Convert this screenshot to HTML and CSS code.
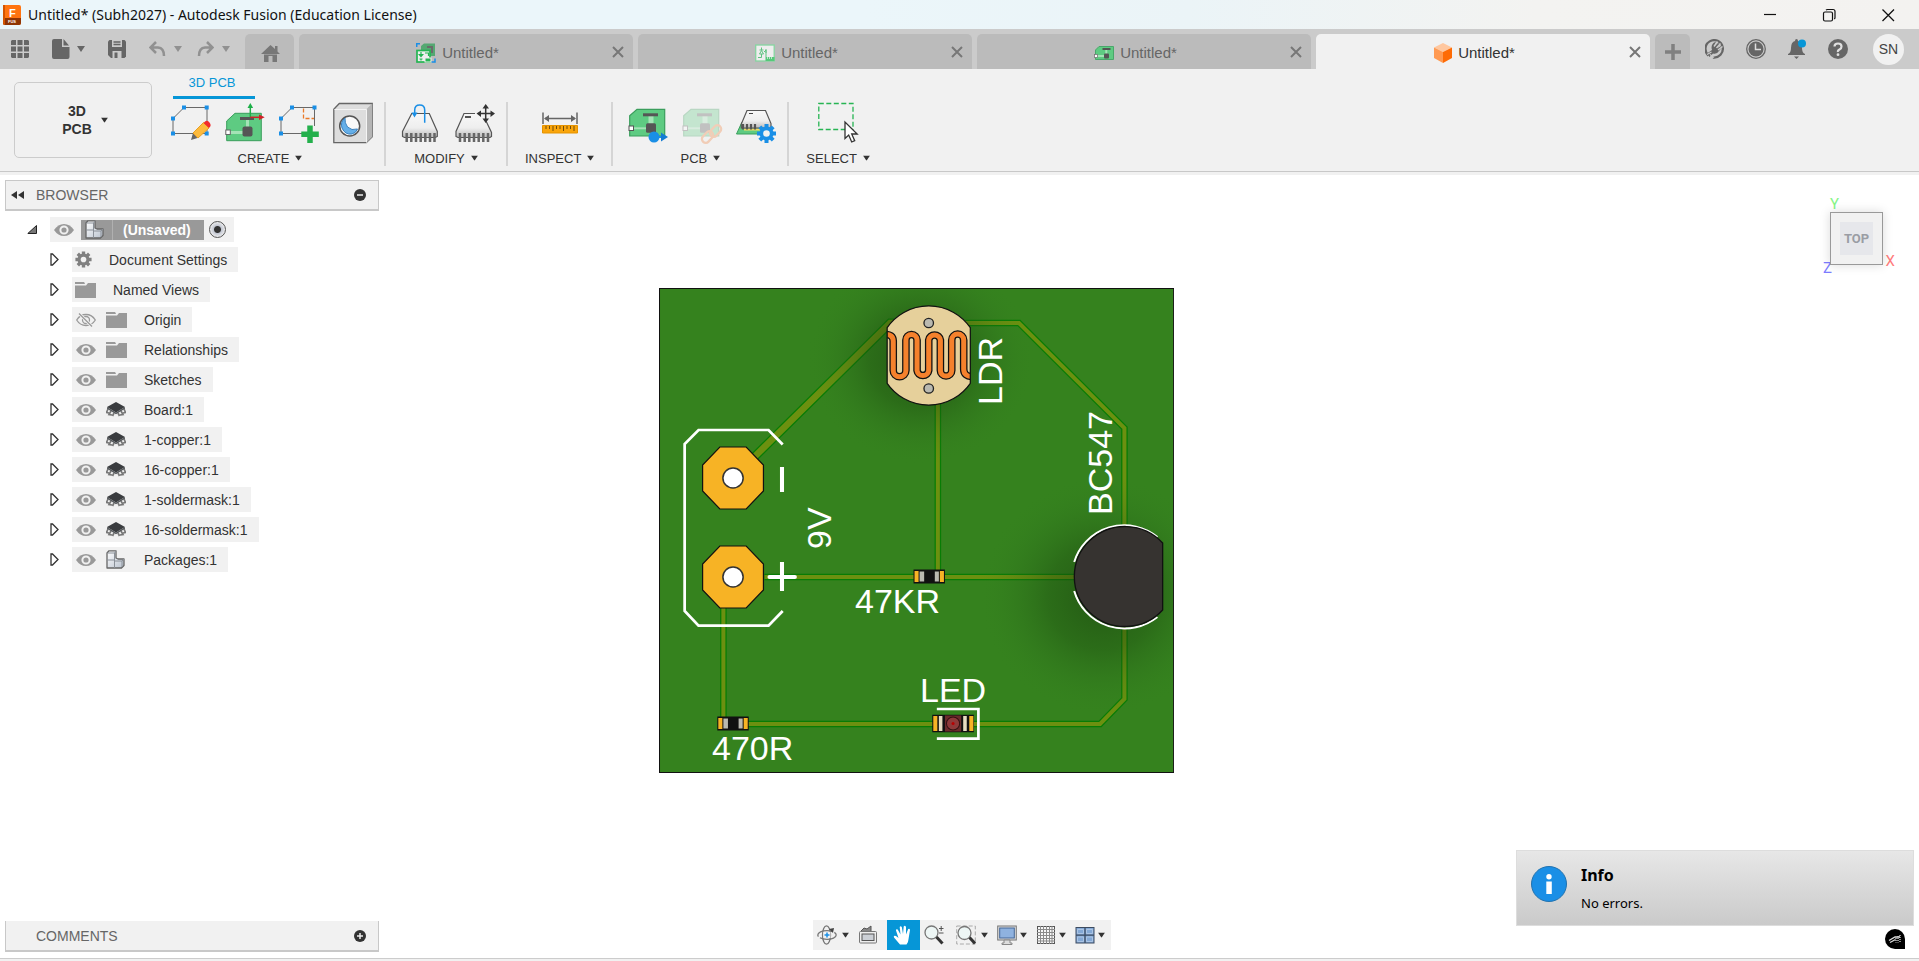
FILE: index.html
```html
<!DOCTYPE html>
<html lang="en">
<head>
<meta charset="utf-8">
<title>Untitled* (Subh2027) - Autodesk Fusion (Education License)</title>
<link rel="stylesheet" href="styles.css">
</head>
<body>
<svg class="defs" aria-hidden="true">
  <defs>
    <linearGradient id="steel" x1="0" y1="0" x2="1" y2="1"><stop offset="0" stop-color="#fff"/><stop offset="1" stop-color="#b9c2ce"/></linearGradient>
    <linearGradient id="chipfill" x1="0" y1="0" x2="0" y2="1"><stop offset="0" stop-color="#f8f8f8"/><stop offset=".6" stop-color="#eee"/><stop offset="1" stop-color="#bbb"/></linearGradient>
  </defs>
  <symbol id="eye" viewBox="0 0 20 14"><path d="M0 7Q4 1 10 1T20 7Q16 13 10 13T0 7Z" fill="#999"/><circle cx="10" cy="7" r="3.600" fill="none" stroke="#f1f1f1" stroke-width="2"/></symbol>
  <symbol id="eyeoff" viewBox="0 0 20 14"><path d="M.7 7Q4 1.500 10 1.500T19.300 7Q16 12.500 10 12.500T.7 7Z" fill="none" stroke="#999" stroke-width="1.300"/><circle cx="10" cy="7" r="3.500" fill="none" stroke="#999" stroke-width="1.300"/><path d="M3 .5 16 13.500" stroke="#f1f1f1" stroke-width="3"/><path d="M3 .5 16 13.500" stroke="#999" stroke-width="1.300"/></symbol>
  <symbol id="folder" viewBox="0 0 21 16"><path d="M0 0h9l1 1.500L9.500 2H0zM0 3.500h11L13 1h8v15H0z" fill="#999"/></symbol>
  <symbol id="layer" viewBox="0 0 20 15"><path d="m2 7-1.500 3.500L3 11M18 7l1.500 3.500L17 11M5 9l-2 3.500 3 .5M15 9l2 3.500-3 .5M8 11l-1.500 3M12 11l1.500 3" fill="none" stroke="#777" stroke-width="1.700"/><path d="M10 0 19 5 10 10.500 1 5Z" fill="#3a3c3f"/><path d="m1 5 9 5.500L19 5v1.800l-9 5.500-9-5.500z" fill="#55585b"/></symbol>
  <symbol id="part" viewBox="0 0 19 19"><path d="M1 3 3 .8h7V8l2 1h6v6.500L15.500 18H1Z" fill="url(#steel)" stroke="#666" stroke-width="1.300" stroke-linejoin="round"/><path d="M1 10h7.500V3M8.500 10V18M10 .8 8.500 3M1.500 3h7M9 11h7l2-2M16 11v6" fill="none" stroke="#8a9098" stroke-width="1"/></symbol>
  <symbol id="x" viewBox="0 0 12 12"><path d="m1 1 10 10M11 1 1 11" stroke="currentColor" stroke-width="2"/></symbol>
  <symbol id="caret" viewBox="0 0 8 6"><path d="M0 0h8L4 6z" fill="currentColor"/></symbol>
  <symbol id="closed" viewBox="0 0 9 13"><path d="M1 1h1.500L8 6.500 2.500 12H1z" fill="#fff" stroke="#333" stroke-width="1.300"/></symbol>
  <symbol id="pcb" viewBox="0 0 40 42"><path d="M1.700 13.700 9 7.300h27.700V34h-35z" fill="#5ecb82" stroke="#3a9e5c" stroke-width="1.200"/><path d="M5 26.300h16" stroke="#a4e3b6" stroke-width="2"/><path d="M20.500 13h5v9h-5z" fill="#a4e3b6"/><path d="M15 11.300h15v3H15z" fill="#555"/><rect x="18" y="21.300" width="10" height="9.500" rx="1.500" fill="#555"/><rect x="1" y="24" width="4.500" height="4.500" fill="#fff" stroke="#555"/></symbol>
  <symbol id="gear" viewBox="0 0 20 20"><g stroke="currentColor" stroke-width="4"><path d="M10 .5v19M.5 10h19M3.300 3.300l13.400 13.400M16.700 3.300 3.300 16.700"/></g><circle cx="10" cy="10" r="7" fill="currentColor"/><circle cx="10" cy="10" r="3.300" fill="#f1f1f1"/></symbol>
</svg>

<header class="titlebar">
  <svg class="logo" viewBox="0 0 18 20"><rect width="18" height="20" rx="2" fill="#ff7410"/><path d="M0 13h18v5q0 2-2 2H2q-2 0-2-2z" fill="#8f3504"/><path d="M0 0h2v20Q0 20 0 18z" fill="#d35400"/><text x="6" y="12" class="logo-f">F</text><text x="5" y="18" class="logo-s">FUS</text></svg>
  <h1>Untitled* (Subh2027) - Autodesk Fusion (Education License)</h1>
  <div class="window-buttons">
    <button aria-label="Minimize"><svg viewBox="0 0 14 14"><path d="M1 6.500h12" stroke="#111" stroke-width="1.200"/></svg></button>
    <button aria-label="Restore"><svg viewBox="0 0 14 14"><g fill="none" stroke="#111" stroke-width="1.200"><rect x="1.500" y="4" width="9" height="9" rx="1.500"/><path d="M4 2Q4.500 1.500 5.500 1.500H11Q13 1.500 13 3.500V9.500Q13 10.500 12.300 11"/></g></svg></button>
    <button aria-label="Close"><svg viewBox="0 0 14 14"><path d="m1.500 1.500 11.500 11.500M13 1.500 1.500 13" stroke="#111" stroke-width="1.300"/></svg></button>
  </div>
</header>

<div class="appbar">
  <div class="quick">
    <button aria-label="Data panel"><svg width="18" height="18" viewBox="0 0 18 18" fill="#666"><path d="M1 0h4v5H0V1zM6.500 0h5v5h-5zM13 0h4l1 1v4h-5zM0 6.500h5v5H0zM6.500 6.500h5v5h-5zM13 6.500h5v5h-5zM0 13h5v5H1l-1-1zM6.500 13h5v5h-5zM13 13h5v4l-1 1h-4z"/></svg></button>
    <button aria-label="File"><svg width="18" height="20" viewBox="0 0 18 20" fill="#666"><path d="M2 0h8v8h7.500v10q0 2-2 2H2q-2 0-2-2V2q0-2 2-2zM11.500 0 17 6.500h-5.500z"/></svg><svg class="caret" viewBox="0 0 8 6"><use href="#caret"/></svg></button>
    <button aria-label="Save"><svg width="18" height="18" viewBox="0 0 18 18"><path d="M1.500 0h15L18 1.500v15L16.500 18H3l-3-3V1.500z" fill="#666"/><path d="M4 0h10v7H4z" fill="#cbcbcb"/><path d="M5.500 2h7M5.500 4.500h7" stroke="#666" stroke-width="1.500"/><path d="M4.500 11h9v7h-9z" fill="#cbcbcb"/><path d="M6.500 12.500h3V18h-3z" fill="#666"/></svg></button>
    <div class="history">
      <button aria-label="Undo"><svg width="17" height="16" viewBox="0 0 17 16"><path d="M1.500 6.500H9Q15 7 15 15M7 1 1.500 6.500 7 12" fill="none" stroke="#919191" stroke-width="2.500"/></svg><svg class="caret" viewBox="0 0 8 6"><use href="#caret"/></svg></button>
      <button aria-label="Redo"><svg width="17" height="16" viewBox="0 0 17 16"><path d="M15.500 6.500H8Q2 7 2 15M10 1l5.500 5.500L10 12" fill="none" stroke="#919191" stroke-width="2.500"/></svg><svg class="caret" viewBox="0 0 8 6"><use href="#caret"/></svg></button>
    </div>
  </div>
  <nav class="tabs" aria-label="Documents">
    <button class="home" aria-label="Home"><svg width="20" height="18" viewBox="0 0 20 18" fill="#777"><path d="M9.500 0 14 4V1h2.500v5.500L19 9H0zM3 9.500h13V17h-4.500v-6h-4v6H3z"/></svg></button>
    <div class="tab"><button class="tab-label"><svg width="20" height="20" viewBox="0 0 20 20"><path d="M5 3 8 .5h11V13H5z" fill="#55a872"/><path d="M11 4h5v6" fill="none" stroke="#6b6b6b" stroke-width="2"/><rect x="1" y="7.500" width="13" height="11.500" fill="#eee" stroke="#24b552" stroke-width="1.700"/><path d="M5 9v3M3.300 11.500h3.400L5 13.500zM5 17.500v-2M3.500 16h3M9 10h3.500v3" stroke="#24b552" stroke-width="1.200" fill="none"/><rect x="9" y="15" width="6" height="4" fill="#24b552" stroke="#eee"/><path d="M.7 4V.7H4M15.500 19h3.500v-3.500" fill="none" stroke="#1a8fe6" stroke-width="1.500"/></svg>Untitled*</button><button class="close" aria-label="Close tab"><svg viewBox="0 0 12 12"><use href="#x"/></svg></button></div>
    <div class="tab"><button class="tab-label"><svg width="20" height="18" viewBox="0 0 20 18"><rect x=".7" y="1" width="18.500" height="16" fill="#eee" stroke="#86d5a0" stroke-width="1.300"/><path d="M3 13.500h3.500V10M6.500 6V3.500M4.500 6h4M4.500 10h4L6.500 6.500zM6.500 13v-3M9 8l2-2v3M11 5v8" fill="none" stroke="#5fc380"/><rect x="10.500" y="13" width="9" height="4" fill="#55c979"/><path d="M12.500 13v2M14.500 13v2M16.500 13v2" stroke="#eee" stroke-width=".7"/></svg>Untitled*</button><button class="close" aria-label="Close tab"><svg viewBox="0 0 12 12"><use href="#x"/></svg></button></div>
    <div class="tab"><button class="tab-label"><svg width="20" height="16" viewBox="0 0 20 16"><path d="M1.500 5 5 1.500h14.500v13h-18z" fill="#5ecb82" stroke="#4aa76b"/><path d="M3 11h8M12.300 4v5" stroke="#a4e3b6" stroke-width="2"/><path d="M8.500 3h8v2h-8z" fill="#555"/><rect x="10" y="8.500" width="5" height="5" rx="1" fill="#555"/><rect x=".5" y="9.500" width="3" height="3" fill="#fff" stroke="#777" stroke-width=".8"/></svg>Untitled*</button><button class="close" aria-label="Close tab"><svg viewBox="0 0 12 12"><use href="#x"/></svg></button></div>
    <div class="tab active"><button class="tab-label"><svg width="18" height="20" viewBox="0 0 18 20"><path d="m9 0 9 4.500L9 9 0 4.500z" fill="#ffc79f"/><path d="m0 4.500 9 4.500v11l-9-5z" fill="#ff9a52"/><path d="M18 4.500 9 9v11l9-5z" fill="#fe6b05"/></svg>Untitled*</button><button class="close" aria-label="Close tab"><svg viewBox="0 0 12 12"><use href="#x"/></svg></button></div>
    <button class="newtab" aria-label="New tab"><svg width="16" height="16" viewBox="0 0 16 16"><path d="M8 0v16M0 8h16" stroke="#808080" stroke-width="3.500"/></svg></button>
  </nav>
  <div class="account">
    <button aria-label="Extensions"><svg width="20" height="20" viewBox="0 0 20 20"><path d="M3.500 16.500A8.700 8.700 0 1 1 8 18.500" fill="none" stroke="#666" stroke-width="2.300"/><path d="M2 14.500 7 11Q5.500 6 9 3.500L11 3l-1.500 4L13 4l2 1-2.500 4L16 7l1 1.500L14 12q-2 3.500-6 2.500L4.500 18z" fill="#666"/><path d="M2 15.500 6.500 13M9 18.500l-4-3" stroke="#cbcbcb" stroke-width="1.200"/><path d="M12.500 2.500 9 7.500M15.500 4.500 11.500 9M17.500 7.500 13 11" stroke="#cbcbcb" stroke-width="1.500"/></svg></button>
    <button aria-label="Job status"><svg width="20" height="20" viewBox="0 0 20 20"><circle cx="10" cy="10" r="9.300" fill="none" stroke="#666" stroke-width="1.300"/><circle cx="10" cy="10" r="7.500" fill="#666"/><path d="M9.500 4.500v6H15" fill="none" stroke="#ddd" stroke-width="1.500"/></svg></button>
    <button aria-label="Notifications"><svg width="20" height="20" viewBox="0 0 20 20"><path d="M1 15q3-1 3-6 0-6 4-7 0-2 1.500-2t1.500 2q4 1 4 7 0 5 3 6v1H1zM7 17.500h5l-2.500 2.500z" fill="#666"/><circle cx="15" cy="4.500" r="4" fill="#0696d7"/></svg></button>
    <button aria-label="Help"><svg width="20" height="20" viewBox="0 0 20 20"><circle cx="10" cy="10" r="10" fill="#666"/><path d="M6.500 7.500Q6.500 4.500 10 4.500t3.500 3q0 2-2 3T10 13" fill="none" stroke="#e0e0e0" stroke-width="2.200"/><circle cx="10" cy="15.700" r="1.400" fill="#e0e0e0"/></svg></button>
    <button class="avatar">SN</button>
  </div>
</div>

<section class="ribbon">
  <button class="workspace"><span>3D<br>PCB</span><svg viewBox="0 0 8 6"><use href="#caret"/></svg></button>
  <div class="ribbon-main">
    <a class="ribbon-tab" href="#create">3D PCB</a>
    <div class="groups">
      <div class="group" id="create">
        <div class="icons">
          <button aria-label="Edit outline"><svg viewBox="0 0 40 42"><path d="M2 31.500V16.500L13 5.500h23v26H2" fill="none" stroke="#686868"/><g fill="#1a8fe6"><path d="M11 3.500h4v4h-4zM33.700 3.500h4v4h-4zM0 14.500h4v4H0zM0 29.500h4v4H0zM33.700 29.500h4v4h-4z"/></g><path d="m20 38 2-7 4.500 5z" fill="#666"/><path d="M22 31 32.500 20.500l5.500 5.500L27 36z" fill="#fdba3c" stroke="#e7a025"/><path d="M32.500 21Q36 17 38.500 20.500 41 23.500 38 26z" fill="#f22b2b"/></svg></button>
          <button aria-label="Place component"><svg viewBox="0 0 40 42"><path d="m1.700 19 8.300-7.700h26.300v27.400H1.700z" fill="#5ecb82" stroke="#3a9e5c"/><path d="M5 30.500h14M22.500 17v9" stroke="#a4e3b6" stroke-width="3"/><path d="M15 15h14v3H15z" fill="#555"/><rect x="17.500" y="24.500" width="10" height="10" rx="2" fill="#555"/><rect x=".8" y="28" width="4.500" height="4.500" fill="#fff" stroke="#666"/><path d="M25.300 15.300V5" stroke="#1daf48" stroke-width="1.500"/><path d="m22.500 6 2.800-5 2.800 5z" fill="#1daf48"/><path d="M25.300 15.300H35" stroke="#d02026" stroke-width="1.500"/><path d="m34 12.500 5.700 2.800L34 18z" fill="#d02026"/></svg></button>
          <button aria-label="New outline"><svg viewBox="0 0 40 42"><path d="M25 31.500H2V16.500L13 5.500h22.500V24" fill="none" stroke="#686868"/><path d="M24.500 6.500v10H35" fill="none" stroke="#ea7a29" stroke-width="1.300" stroke-dasharray="4 2"/><g fill="#1a8fe6"><path d="M11 3.500h4v4h-4zM33.500 3.500h4v4h-4zM0 14.500h4v4H0zM0 29.500h4v4H0z"/></g><path d="M31 23.500V41M22.300 32.300h17.500" stroke="#24b04c" stroke-width="5.500"/></svg></button>
          <button aria-label="Hole"><svg viewBox="0 0 40 42"><path d="M.8 7.300 6.300 1.500h33v33.200l-6 6H.8z" fill="#ddd" stroke="#666" stroke-width="1.300"/><path d="m33.300 7.300 6-5.800v33.200l-6 6z" fill="#b5b5b5"/><path d="M1.500 7.500h32v33" fill="none" stroke="#f4f4f4"/><circle cx="16.700" cy="24" r="10" fill="#fafafa" stroke="#555" stroke-width="1.500"/><path d="M12 16q-5 4-3 10 3 7 10 6 4-1 5.500-5-6 2-10-2-3-4-2.500-9z" fill="#65afe8" stroke="#3980bd"/></svg></button>
        </div>
        <button class="group-label">CREATE<svg viewBox="0 0 8 6"><use href="#caret"/></svg></button>
      </div>
      <div class="group">
        <div class="icons">
          <button aria-label="Flip component"><svg viewBox="0 0 40 42"><path d="M10.700 11.500h17.600l8 18v5l-2 1H3.500l-2-1v-5z" fill="url(#chipfill)" stroke="#555" stroke-width="1.200"/><path d="M5.700 31v9M10.300 31v9M15 31v9M19.700 31v9M24.300 31v9M29 31v9M33.500 31v9" stroke="#666" stroke-width="2.500"/><path d="M23.700 20.700V8q0-5-5-5t-5 5v3" fill="none" stroke="#1a8fe6" stroke-width="1.500"/><path d="m10.500 10.500 6 0-3 5z" fill="#1a8fe6"/></svg></button>
          <button aria-label="Move component"><svg viewBox="0 0 40 42"><path d="M20 11.500H9l-8 18v5l2 1h32l1.500-1v-4L31 19" fill="url(#chipfill)" stroke="#555" stroke-width="1.200"/><path d="M5 31v9M9.700 31v9M14.300 31v9M19 31v9M23.700 31v9M28.300 31v9M33 31v9" stroke="#666" stroke-width="2.500"/><path d="M10 15h6" stroke="#555" stroke-width="2"/><path d="M30.700 6v11M25 11.500h11.500" stroke="#333" stroke-width="1.500"/><path d="m27.500 6.500 3.200-4.500L34 6.500zM27.500 16.500l3.200 4.500 3.300-4.500zM26 8.500l-4.500 3L26 15zM35.500 8.500l4.500 3-4.500 3.500z" fill="#333"/></svg></button>
        </div>
        <button class="group-label">MODIFY<svg viewBox="0 0 8 6"><use href="#caret"/></svg></button>
      </div>
      <div class="group wide">
        <div class="icons">
          <button aria-label="Measure"><svg viewBox="0 0 40 42"><path d="M3 10.500V22M37 10.500V22M5 16.500h30" stroke="#666" stroke-width="1.500"/><path d="m4 16.500 5-3.500v7zM36 16.500 31 13v7z" fill="#666"/><path d="M2.500 23.500h35V31h-35z" fill="#faa50b" stroke="#e59300"/><path d="M6 24v3M9.500 24v3M13 24v5M16.500 24v3M20 24v3M23.500 24v5M27 24v3M30.500 24v3M34 24v5" stroke="#704c0a"/></svg></button>
        </div>
        <button class="group-label">INSPECT<svg viewBox="0 0 8 6"><use href="#caret"/></svg></button>
      </div>
      <div class="group">
        <div class="icons">
          <button aria-label="Push to PCB"><svg viewBox="0 0 40 42"><use href="#pcb"/><path d="M29 35h6" stroke="#1a8fe6" stroke-width="2"/><path d="m33 30.500 7 4.500-7 4.500z" fill="#147cd2"/><circle cx="26" cy="35" r="5.500" fill="#1a8fe6"/></svg></button>
          <button aria-label="Link PCB" disabled><svg viewBox="0 0 40 42"><g opacity=".3"><use href="#pcb"/></g><g fill="none" stroke="#f1cdb7" stroke-width="2.300"><rect x="-6.500" y="-3.700" width="13" height="7.500" rx="3.700" transform="translate(25.500 35) rotate(-48)"/><rect x="-6.500" y="-3.700" width="13" height="7.500" rx="3.700" transform="translate(33.500 29) rotate(-48)"/></g></svg></button>
          <button aria-label="PCB settings"><svg viewBox="0 0 40 42"><path d="m6 20-5.500 12h27L34 20z" fill="#5ecb82" stroke="#3a9e5c"/><path d="M8 27.500h18" stroke="#f4dc65" stroke-width="2"/><path d="M11 8.500h18.500l5.500 13v4.500H5.300v-4z" fill="url(#chipfill)" stroke="#555" stroke-width="1.200"/><path d="M7 22v5.500M11 22v5.500M15 22v5.500M19 22v5.500" stroke="#555" stroke-width="2.200"/><path d="M13 11.500h4" stroke="#444"/><g color="#1a8fe6"><use href="#gear" x="20.500" y="21.500" width="20" height="20"/></g></svg></button>
        </div>
        <button class="group-label">PCB<svg viewBox="0 0 8 6"><use href="#caret"/></svg></button>
      </div>
      <div class="group wide">
        <div class="icons">
          <button aria-label="Select"><svg viewBox="0 0 40 42"><path d="M.8 1.500H35v26H.8z" fill="none" stroke="#27b553" stroke-width="1.300" stroke-dasharray="5 2.500"/><path d="M27 20v16.500l3.700-3.500 3 7 3-1.300-3-6.700h5.500z" fill="#fff" stroke="#333" stroke-width="1.300"/></svg></button>
        </div>
        <button class="group-label">SELECT<svg viewBox="0 0 8 6"><use href="#caret"/></svg></button>
      </div>
    </div>
  </div>
</section>

<main class="canvas">
  <aside class="side">
    <div class="panel-head"><svg width="13" height="8" viewBox="0 0 13 8"><path d="M6 0v8L0 4zM13 0v8L7 4z" fill="#333"/></svg><h2>BROWSER</h2><button aria-label="Collapse browser"><svg viewBox="0 0 12 12"><circle cx="6" cy="6" r="6" fill="#333"/><path d="M3 6h6" stroke="#eee" stroke-width="1.500"/></svg></button></div>
    <ul class="tree">
      <li class="root"><button class="twist" aria-label="Collapse"><svg width="10" height="9" viewBox="0 0 10 9"><path d="M9.500.5v8H.8z" fill="#777" stroke="#222"/></svg></button><div class="node"><svg class="eye" viewBox="0 0 20 14"><use href="#eye"/></svg><div class="selected"><svg class="part" viewBox="0 0 19 19"><use href="#part"/></svg><span>(Unsaved)</span></div><input type="radio" checked aria-label="Activate component"></div></li>
      <li><button class="twist" aria-label="Expand"><svg viewBox="0 0 9 13"><use href="#closed"/></svg></button><div class="node settings"><svg class="gear" viewBox="0 0 20 20"><use href="#gear"/></svg><span>Document Settings</span></div></li>
      <li><button class="twist" aria-label="Expand"><svg viewBox="0 0 9 13"><use href="#closed"/></svg></button><div class="node views"><svg class="folder" viewBox="0 0 21 16"><use href="#folder"/></svg><span>Named Views</span></div></li>
      <li><button class="twist" aria-label="Expand"><svg viewBox="0 0 9 13"><use href="#closed"/></svg></button><div class="node"><svg class="eye" viewBox="0 0 20 14"><use href="#eyeoff"/></svg><svg class="folder" viewBox="0 0 21 16"><use href="#folder"/></svg><span>Origin</span></div></li>
      <li><button class="twist" aria-label="Expand"><svg viewBox="0 0 9 13"><use href="#closed"/></svg></button><div class="node"><svg class="eye" viewBox="0 0 20 14"><use href="#eye"/></svg><svg class="folder" viewBox="0 0 21 16"><use href="#folder"/></svg><span>Relationships</span></div></li>
      <li><button class="twist" aria-label="Expand"><svg viewBox="0 0 9 13"><use href="#closed"/></svg></button><div class="node"><svg class="eye" viewBox="0 0 20 14"><use href="#eye"/></svg><svg class="folder" viewBox="0 0 21 16"><use href="#folder"/></svg><span>Sketches</span></div></li>
      <li><button class="twist" aria-label="Expand"><svg viewBox="0 0 9 13"><use href="#closed"/></svg></button><div class="node"><svg class="eye" viewBox="0 0 20 14"><use href="#eye"/></svg><svg class="layer" viewBox="0 0 20 15"><use href="#layer"/></svg><span>Board:1</span></div></li>
      <li><button class="twist" aria-label="Expand"><svg viewBox="0 0 9 13"><use href="#closed"/></svg></button><div class="node"><svg class="eye" viewBox="0 0 20 14"><use href="#eye"/></svg><svg class="layer" viewBox="0 0 20 15"><use href="#layer"/></svg><span>1-copper:1</span></div></li>
      <li><button class="twist" aria-label="Expand"><svg viewBox="0 0 9 13"><use href="#closed"/></svg></button><div class="node"><svg class="eye" viewBox="0 0 20 14"><use href="#eye"/></svg><svg class="layer" viewBox="0 0 20 15"><use href="#layer"/></svg><span>16-copper:1</span></div></li>
      <li><button class="twist" aria-label="Expand"><svg viewBox="0 0 9 13"><use href="#closed"/></svg></button><div class="node"><svg class="eye" viewBox="0 0 20 14"><use href="#eye"/></svg><svg class="layer" viewBox="0 0 20 15"><use href="#layer"/></svg><span>1-soldermask:1</span></div></li>
      <li><button class="twist" aria-label="Expand"><svg viewBox="0 0 9 13"><use href="#closed"/></svg></button><div class="node"><svg class="eye" viewBox="0 0 20 14"><use href="#eye"/></svg><svg class="layer" viewBox="0 0 20 15"><use href="#layer"/></svg><span>16-soldermask:1</span></div></li>
      <li><button class="twist" aria-label="Expand"><svg viewBox="0 0 9 13"><use href="#closed"/></svg></button><div class="node"><svg class="eye" viewBox="0 0 20 14"><use href="#eye"/></svg><svg class="part" viewBox="0 0 19 19"><use href="#part"/></svg><span>Packages:1</span></div></li>
    </ul>
    <div class="panel-head comments"><h2>COMMENTS</h2><button aria-label="Expand comments"><svg viewBox="0 0 12 12"><circle cx="6" cy="6" r="6" fill="#333"/><path d="M3 6h6M6 3v6" stroke="#eee" stroke-width="1.500"/></svg></button></div>
  </aside>

  <svg class="board" viewBox="0 0 515 486" role="img" aria-label="Circuit board, top view">
    <defs>
      <radialGradient id="shade"><stop offset="0" stop-color="#173c0c" stop-opacity=".6"/><stop offset=".45" stop-color="#1c4a10" stop-opacity=".38"/><stop offset=".75" stop-color="#28641a" stop-opacity=".15"/><stop offset="1" stop-color="#35821e" stop-opacity="0"/></radialGradient>
      <clipPath id="ldrclip"><path d="M225 39.700A49.500 49.500 0 0 1 307 39.700V95.300A49.500 49.500 0 0 1 225 95.300Z"/></clipPath>
      <clipPath id="edge"><path d="M0 0h508v485H0z"/></clipPath>
      <g id="traces" fill="none"><path d="M302 35h53L459 140V411L435 436H73M275 110V289M104 289H412M63.500 318V436"/></g>
      <g id="resistor"><path d="M0 0h31v14H0z" fill="#111"/><path d="M1 1.500h4v11H1zM26 1.500h4v11h-4z" fill="#f7b325"/><path d="M6 2h4.500v10H6zM21 2h4v10h-4z" fill="#bab9b0"/></g>
      <g id="pad"><path d="M-13-31H13L30-13V13L13 31H-13L-30 13V-13Z" fill="#f7b325" stroke="#111" stroke-width="1.200"/><circle r="10" fill="#fff" stroke="#333" stroke-width="1.500"/></g>
      <path id="coil" d="M222 46.500Q231 46 231 53V82.500A6.200 6.200 0 0 0 243.500 82.500V52A5.500 5.500 0 0 1 254.500 52V82.500A5.800 5.800 0 0 0 266 82.500V52A5.800 5.800 0 0 1 277.500 52V82.500A5.600 5.600 0 0 0 288.700 82.500V52A5.900 5.900 0 0 1 300.500 52V81Q300.500 89 310 88.500"/>
    </defs>
    <g transform="scale(1.014 1)">
      <rect x=".5" y=".5" width="507" height="484" fill="#35821e"/>
      <g stroke="#087c05"><path d="M94 169 228 35H240" stroke-width="9" fill="none"/><g stroke-width="6.500"><use href="#traces"/></g></g>
      <g stroke="#6c9010"><path d="M94 169 228 35H240" stroke-width="6.500" fill="none"/><g stroke-width="4"><use href="#traces"/></g></g>
      <g clip-path="url(#edge)"><ellipse cx="258" cy="72" rx="112" ry="105" fill="url(#shade)"/><ellipse cx="438" cy="308" rx="122" ry="120" fill="url(#shade)"/></g>
      <g fill="none" stroke="#fff"><path d="M122 156.500 108 142H39L25.300 156V323L39 337.700h69L122 323" stroke-width="2.700"/><path d="M121.300 179v25M121.300 274v29" stroke-width="4"/><path d="M109 289h25" stroke-width="4" stroke-linecap="round"/><path d="M274 421H315V450.700H274" stroke-width="2.700"/></g>
      <use href="#pad" x="73" y="190"/><use href="#pad" x="73" y="289"/>
      <g clip-path="url(#ldrclip)"><path d="M220 10h100v115H220z" fill="#e6d09b"/><use href="#coil" fill="none" stroke="#111" stroke-width="7.500"/><use href="#coil" fill="none" stroke="#f5812c" stroke-width="5"/></g>
      <path d="M225 39.700A49.500 49.500 0 0 1 307 39.700V95.300A49.500 49.500 0 0 1 225 95.300Z" fill="none" stroke="#111" stroke-width="1.200"/>
      <circle cx="266" cy="35" r="4.700" fill="#bab9b0" stroke="#222" stroke-width="1.300"/><circle cx="266" cy="100.500" r="4.700" fill="#bab9b0" stroke="#222" stroke-width="1.300"/>
      <path d="M491.500 249A51.500 51.500 0 0 0 409.500 274M409.500 303A51.500 51.500 0 0 0 491.500 329" fill="none" stroke="#fff" stroke-width="2"/>
      <path d="M496.700 255A50 50 0 1 0 496.700 322Z" fill="#363330" stroke="#111" stroke-width="1.300"/>
      <use href="#resistor" x="251" y="281.500"/><use href="#resistor" x="57.500" y="428.500"/>
      <path d="M269.500 426.700h41v17.600h-41z" fill="#111"/><path d="M270.500 428h4v15h-4zM306 428h4v15h-4z" fill="#f7b325"/><path d="M276 428h3.500v15H276zM300 428h3.500v15H300z" fill="#e6dcc0"/><path d="M282 427.500h16v16h-16z" fill="#6b2b2b"/><circle cx="290" cy="435.500" r="6.500" fill="#8e3a3a" stroke="#311"/><circle cx="290" cy="435.500" r="1.500" fill="#b80000"/>
      <rect x=".5" y=".5" width="507" height="484" fill="none" stroke="#111"/>
    </g>
    <g class="silk"><text transform="translate(343 117) rotate(-90)">LDR</text><text transform="translate(453 227) rotate(-90)">BC547</text><text transform="translate(172 261) rotate(-90)">9V</text><text x="196" y="325">47KR</text><text x="261" y="414">LED</text><text x="53" y="472">470R</text></g>
  </svg>

  <div class="viewcube"><span class="y">Y</span><span class="z">Z</span><span class="axis-x">X</span><button><span>TOP</span></button></div>

  <div class="navbar" role="toolbar" aria-label="Navigation">
    <button aria-label="Orbit"><svg class="nav-icon" viewBox="0 0 20 20"><ellipse cx="10" cy="10" rx="9.200" ry="4.300" fill="none" stroke="#777" stroke-width="1.300" stroke-dasharray="18 2"/><ellipse cx="9.500" cy="10" rx="4" ry="9.200" fill="none" stroke="#777" stroke-width="1.300"/><path d="M6.500 7h7v6h-7z" fill="#f1f1f1"/><path d="M10 7.500v5M7.500 10h5" stroke="#1a8fe6" stroke-width="1.500"/><path d="m12 4 5-1-1 5z" fill="#444"/></svg><svg class="nav-caret" viewBox="0 0 8 6"><use href="#caret"/></svg></button>
    <button aria-label="Look at"><svg class="nav-icon" viewBox="0 0 20 20"><path d="m3 6 3-3 3 1 4-3v5" fill="#888" stroke="#555"/><rect x="1.500" y="6.500" width="17" height="11.500" rx="1" fill="#eee" stroke="#777"/><rect x="4" y="9" width="12" height="6.500" fill="#ccd0d6" stroke="#555"/></svg></button>
    <button class="pan" aria-label="Pan"><svg class="nav-icon" viewBox="0 0 20 20"><path d="M7 19.500Q4 16 1 12.500 0 10 3 11l2.500 2L3 5.500Q3 3.500 4.700 4.500L7.500 9.500 6.700 2Q7.500.5 8.800 2L10 9 10.700 1.500Q12 0 13 2V9.500L15.200 4Q16.700 3 17 5L15.700 13Q15.500 17 13.500 19.500z" fill="#fff"/></svg></button>
    <button class="zoom" aria-label="Zoom"><svg class="nav-icon" viewBox="0 0 20 20"><circle cx="7.500" cy="7.500" r="6.500" fill="#edf6f5" stroke="#777" stroke-width="1.300"/><path d="m12.500 12 6 6.500" stroke="#333" stroke-width="3"/><path d="M15 3.500h4.500M17.200 1v5M15 8h4.500" stroke="#555"/></svg></button>
    <button class="fit" aria-label="Fit"><svg class="nav-icon" viewBox="0 0 20 20"><path d="M.7 1h18.600v18H.7z" fill="none" stroke="#aaa" stroke-dasharray="4 2"/><circle cx="8.500" cy="8" r="6.500" fill="#edf6f5" stroke="#777" stroke-width="1.300"/><path d="m13.500 12.500 5.500 6" stroke="#333" stroke-width="3"/></svg><svg class="nav-caret" viewBox="0 0 8 6"><use href="#caret"/></svg></button>
    <button class="tight" aria-label="Display settings"><svg class="nav-icon" viewBox="0 0 20 20"><rect x=".7" y="1" width="18.600" height="14" fill="#ddd" stroke="#777"/><rect x="2.700" y="3" width="14.600" height="10" fill="#8fb2df" stroke="#456797"/><path d="M7 15h6v3h2v1.500H5V18h2z" fill="#ddd" stroke="#888"/></svg><svg class="nav-caret" viewBox="0 0 8 6"><use href="#caret"/></svg></button>
    <button class="tight" aria-label="Grid settings"><svg class="nav-icon" viewBox="0 0 20 20"><rect x="1.500" y="1.500" width="17" height="17" fill="#f6f6f6" stroke="#555"/><path d="M4.500 1v18M7.500 1v18M10.500 1v18M13.500 1v18M16 1v18M1 4.500h18M1 7.500h18M1 10.500h18M1 13.500h18M1 16h18" stroke="#8a8a8a"/></svg><svg class="nav-caret" viewBox="0 0 8 6"><use href="#caret"/></svg></button>
    <button class="tight" aria-label="Viewports"><svg class="nav-icon" viewBox="0 0 20 20"><rect x="1" y="2.500" width="18" height="15.500" fill="#84a9d6" stroke="#3c4b60"/><path d="M10 2.500V18M1 10.200h18" stroke="#3c4b60" stroke-width="1.300"/><path d="M2.500 4.500h6v4h-6zM11.500 4.500h6v4h-6zM2.500 12h6v4.500h-6zM11.500 12h6v4.500h-6z" fill="none" stroke="#abc4e4"/></svg><svg class="nav-caret" viewBox="0 0 8 6"><use href="#caret"/></svg></button>
  </div>

  <div class="toast" role="status"><svg viewBox="0 0 36 36"><circle cx="18" cy="18" r="17.500" fill="#1a8fe6" stroke="#2272ae"/><circle cx="18" cy="10.700" r="2.700" fill="#fff"/><path d="M15.300 15.500h5.500V28h-5.500z" fill="#fff"/></svg><div><h3>Info</h3><p>No errors.</p></div></div>
  <button class="assistant" aria-label="Assistant"><svg viewBox="0 0 20 20"><path d="M10 0a10 10 0 0 1 10 10V20H10A10 10 0 0 1 10 0Z" fill="#000"/><path d="m4 11.500 6-3.500h5M5 13.500l5.500-3" stroke="#ddd" stroke-width="1.300" fill="none"/><path d="M11 9v4.500M13 7v6.500M15 6v7.500" stroke="#ddd" stroke-dasharray="1 1" stroke-width="1.300"/></svg></button>
</main>
</body>
</html>
```

FILE: styles.css
```css
* { box-sizing: border-box; }
body {
  margin: 0;
  height: 100vh;
  display: flex;
  flex-direction: column;
  background: #f1f1f1;
  font-family: "Liberation Sans", Arial, sans-serif;
  font-size: 13px;
  color: #333;
  overflow: hidden;
}
h1, h2, h3, p, ul { margin: 0; padding: 0; font-weight: normal; }
button { border: 0; padding: 0; background: none; font: inherit; color: inherit; display: flex; align-items: center; justify-content: center; }
svg { display: block; flex: none; }
.defs { position: absolute; width: 0; height: 0; }

.titlebar { flex: none; display: flex; align-items: center; height: 29px; padding: 0 24px 0 3px; background: linear-gradient(90deg, #ebf6fa 0, #ebf6fa 45%, #ebf4f7 62%, #f3f3f1 80%, #f3f2f0 100%); }
.logo { width: 18px; height: 20px; }
.logo-f { font: bold 11px "Liberation Sans", sans-serif; fill: #fff; }
.logo-s { font: bold 4px "Liberation Sans", sans-serif; fill: #fff; }
.titlebar h1 { margin-left: 7px; font: 14px/20px "Noto Sans", sans-serif; color: #111; }
.window-buttons { margin-left: auto; display: flex; gap: 45px; }
.window-buttons svg { width: 14px; height: 14px; }

.appbar { flex: none; display: flex; height: 40px; background: #cbcbcb; }
.quick { display: flex; align-items: center; gap: 23px; padding: 0 15px 0 11px; color: #666; }
.quick button { gap: 7px; }
.history { display: flex; gap: 15px; color: #919191; }
.history button { gap: 8px; }
.caret { width: 8px; height: 6px; }
.tabs { flex: 1; display: flex; gap: 5px; padding-top: 5px; }
.home { width: 49px; padding: 4px 0 0 3px; background: #bbb; border-radius: 5px 5px 0 0; }
.tab { flex: 1; display: flex; align-items: center; padding: 0 9px 0 4px; background: #bbb; border-radius: 5px 5px 0 0; color: #666; font-size: 15px; }
.tab.active { background: #f1f1f1; color: #333; }
.tab-label { flex: 1; gap: 6px; height: 35px; padding-top: 2px; }
.close { color: #777; }
.close svg { width: 12px; height: 12px; }
.newtab { width: 35px; background: #bbb; border-radius: 5px 5px 0 0; }
.account { display: flex; align-items: center; gap: 21px; padding: 0 15px; }
.avatar { width: 31px; height: 31px; margin-left: 4px; border-radius: 50%; background: #f1f1f1; color: #444; font-size: 14px; }

.ribbon { flex: none; display: flex; gap: 4px; height: 106px; padding: 0 14px; background: #f1f1f1; position: relative; }
.ribbon::after { content: ""; position: absolute; left: 0; right: 0; bottom: 3px; height: 1px; background: #c8c8c8; }
.workspace { width: 138px; height: 76px; margin-top: 13px; padding-left: 4px; gap: 9px; border: 1px solid #ccc; border-radius: 5px; font-size: 14px; font-weight: bold; line-height: 18px; }
.workspace svg, .group-label svg { width: 7px; height: 6px; }
.ribbon-tab { display: flex; width: 82px; height: 30px; margin-left: 17px; padding-right: 4px; align-items: center; justify-content: center; border-bottom: 3px solid #0696d7; color: #0696d7; text-decoration: none; }
.groups { display: flex; padding-top: 3px; }
.group { border-right: 2px solid #d5d5d5; height: 64px; display: flex; flex-direction: column; align-items: center; }
.group:last-child { border: 0; }
.icons { display: flex; gap: 14px; padding: 0 11px 0 15px; }
.wide .icons { padding: 0; }
.group.wide { padding: 0 17px; }
.icons button > svg { width: 40px; height: 42px; overflow: visible; }
.group-label { flex: none; height: 20px; margin-top: 4px; gap: 6px; white-space: nowrap; }

.canvas { flex: 1; min-height: 0; position: relative; display: flex; background: #fff; border-bottom: 1px solid #ccc; margin-bottom: 2px; }
.side { width: 374px; margin: 5px 0 6px 5px; display: flex; flex-direction: column; }
.panel-head { display: flex; align-items: center; height: 31px; padding: 0 12px 0 5px; background: #f1f1f1; border: 1px solid #c8c8c8; border-bottom-width: 2px; }
.panel-head h2 { flex: 1; margin-left: 12px; font-size: 14px; color: #666; }
.panel-head button svg { width: 12px; height: 12px; }
.comments { margin-top: auto; border-top: 0; padding-left: 18px; }
.tree { list-style: none; padding-top: 6px; font-size: 14px; }
.tree li { display: flex; height: 25px; margin-bottom: 5px; padding-left: 45px; }
.tree .root { padding-left: 22px; }
.twist { width: 9px; }
.twist svg { width: 9px; height: 13px; }
.root .twist { width: 10px; }
.root .twist svg { width: 10px; height: 9px; }
.node { display: flex; align-items: center; margin-left: 13px; padding: 0 11px 0 4px; background: #f1f1f1; white-space: nowrap; }
.root .node { margin-left: 13px; padding: 0 8px 0 4px; }
.eye { width: 20px; height: 14px; margin-right: 10px; }
.root .eye { margin-right: 7px; }
.folder { width: 21px; height: 16px; }
.layer { width: 20px; height: 15px; margin-right: 1px; }
.part { width: 19px; height: 19px; margin-right: 2px; }
.gear { width: 17px; height: 17px; color: #808080; }
.node span { margin-left: 17px; }
.settings { padding-left: 3px; }
.views { padding-left: 3px; }
.selected { display: flex; align-items: center; height: 20px; padding: 0 13px 0 4px; background: linear-gradient(90deg, #999 31px, #b0b0b0 31px, #b0b0b0 32px, #999 32px); color: #fff; font-weight: bold; }
.node input { appearance: none; width: 17px; height: 17px; margin: 0 0 0 5px; border: 1px solid #555; border-radius: 50%; background: radial-gradient(circle, #333 3px, #c3c7d2 4px, #f1f1f1 8px); }

.board { position: absolute; left: 659px; top: 113px; width: 515px; height: 486px; }
.silk { font: 34px "Liberation Sans", sans-serif; fill: #fff; }

.viewcube { position: absolute; right: 28px; top: 20px; width: 64px; height: 78px; font: bold 15px Roboto, sans-serif; }
.viewcube button { position: absolute; left: 3px; top: 17px; width: 53px; height: 53px; background: #f1f1f1; border: 1px solid #999; box-shadow: 0 0 10px rgba(0, 0, 0, .15); color: #9a9da4; font-size: 13px; }
.viewcube button span { width: 33px; line-height: 33px; background: #e6e7eb; }
.y, .z, .axis-x { position: absolute; line-height: 14px; font-weight: normal; }
.y { left: 3px; top: 2px; color: #86f586; }
.z { left: -4px; bottom: -2px; color: #7c7cff; }
.axis-x { right: -4px; bottom: 5px; color: #ff7c7c; }

.navbar { position: absolute; left: calc(50% + 2px); bottom: 8px; transform: translateX(-50%); display: flex; gap: 9px; height: 30px; padding: 0 6px 0 4px; background: #f1f1f1; }
.navbar button { gap: 5px; }
.navbar .tight { gap: 3px; }
.navbar .pan { width: 33px; background: #0696d7; }
.navbar .zoom { margin-left: -5px; }
.navbar .fit { margin-left: 3px; }
.nav-icon { width: 20px; height: 20px; }
.nav-caret { width: 7px; height: 6px; }

.toast { position: absolute; right: 5px; bottom: 32px; width: 398px; height: 76px; display: flex; gap: 14px; padding: 15px 14px; background: linear-gradient(#e7e7e7, #cacaca); border: 1px solid #ddd; color: #000; font-family: "Noto Sans", sans-serif; }
.toast svg { width: 36px; height: 36px; }
.toast h3 { font-size: 16px; line-height: 18px; font-weight: bold; }
.toast p { margin-top: 10px; font-size: 13px; line-height: 18px; }
.assistant { position: absolute; right: 14px; bottom: 9px; }
.assistant svg { width: 20px; height: 20px; }
```
